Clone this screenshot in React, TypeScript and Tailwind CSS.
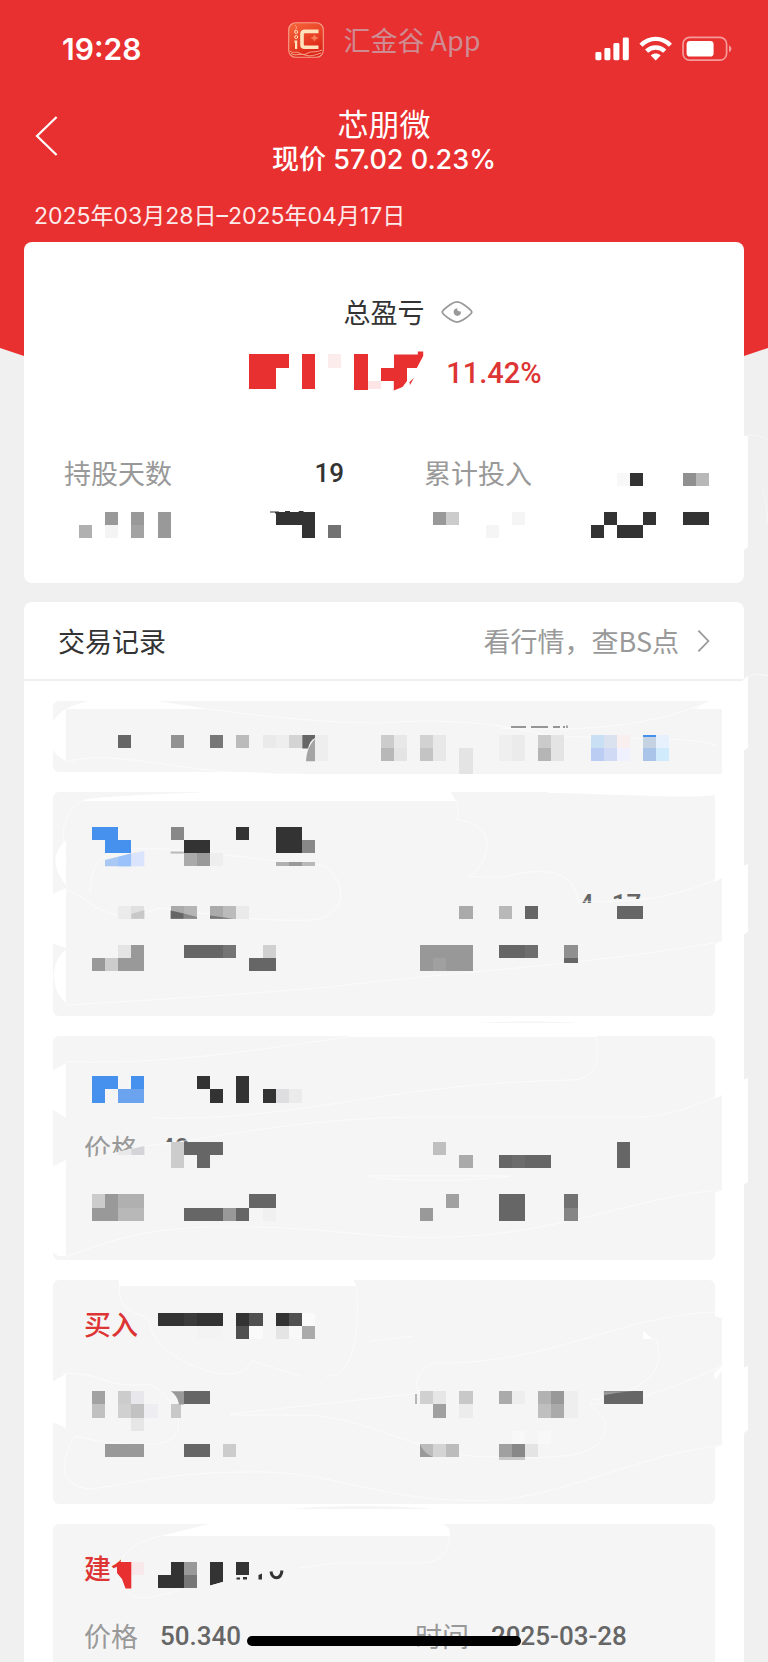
import React from "react";

const CELL = 13.125;

// [column, row, width, height, colour], all measured in mosaic cells
type Cell = [number, number, number, number, string];

const INK = "#333333";
const GREY = "#666666";
const MID = "#999999";
const BLUE = "#4690ee";
const RED = "#e83030";
const PANEL = "#f5f5f5";

function Mosaic({
  x,
  y,
  width,
  height,
  cells,
  under,
  children,
}: {
  x: number;
  y: number;
  width: number;
  height: number;
  cells: Cell[];
  under?: React.ReactNode;
  children?: React.ReactNode;
}) {
  return (
    <svg
      className="pointer-events-none absolute left-0 top-0 overflow-visible"
      width={width}
      height={height}
      viewBox={`${x} ${y} ${width} ${height}`}
      aria-hidden="true"
    >
      {under}
      <g shapeRendering="crispEdges">
        {cells.map(([c, r, w, h, fill], i) => (
          <rect key={i} x={c * CELL} y={r * CELL} width={w * CELL} height={h * CELL} fill={fill} />
        ))}
      </g>
      {children}
    </svg>
  );
}

// Faint brush edges left on the panels
function Wisps({ paths }: { paths: string[] }) {
  return (
    <g fill="none" stroke="#ffffff" strokeOpacity="0.55">
      {paths.map((d) => (
        <path key={d} d={d} />
      ))}
    </g>
  );
}

const summaryCells: Cell[] = [
  [19, 27, 3, 1, RED], [19, 28, 2, 1.6, RED], [23, 27, 1, 2.6, RED], [25, 27, 1, 1, "#fdecec"],
  [27, 27, 1, 2.7, RED], [28, 29, 1, 0.6, "#fde4e6"], [29, 28, 2, 1, RED],
  [47, 36, 1, 1, "#f8f8f8"], [48, 36, 1, 1, INK], [52, 36, 1, 1, "#909090"], [53, 36, 1, 1, "#b8b8b8"],
  [6, 40, 1, 1, "#b0b0b0"], [8, 39, 1, 1, MID], [8, 40, 1, 1, "#f4f4f4"], [10, 39, 1, 1, MID],
  [10, 40, 1, 1, "#a3a3a3"], [12, 39, 1, 2, MID], [21, 39, 3, 1, INK], [23, 40, 1, 1, INK],
  [25, 40, 1, 1, "#727272"], [33, 39, 1, 1, MID], [34, 39, 1, 1, "#cccccc"], [37, 40, 1, 1, "#f5f5f5"],
  [39, 39, 1, 1, "#f5f5f5"], [45, 40, 1, 1, INK], [46, 39, 1, 1, INK], [47, 40, 2, 1, INK],
  [49, 39, 1, 1, INK], [52, 39, 2, 1, INK],
];

const headCells: Cell[] = [
  [9, 56, 1, 1, GREY], [13, 56, 1, 1, "#929292"], [16, 56, 1, 1, "#777777"], [18, 56, 1, 1, "#bbbbbb"],
  [20, 56, 1, 1, "#eaeaea"], [21, 56, 1, 1, "#eeeeee"], [22, 56, 1, 1, "#d4d4d4"], [24, 56, 1, 2, "#eeeeee"],
  [29, 56, 1, 1, "#cccccc"], [29, 57, 1, 1, "#b8b8b8"], [30, 56, 1, 1, "#e8e8e8"], [30, 57, 1, 1, "#e4e4e4"],
  [32, 56, 1, 1, "#d2d2d2"], [32, 57, 1, 1, "#c4c4c4"], [33, 56, 1, 2, "#e8e8e8"], [35, 57, 1, 2, "#e4e4e4"],
  [38, 56, 1, 2, "#efefef"], [39, 56, 1, 2, "#ebebeb"], [41, 56, 1, 1, "#cbcbcb"], [41, 57, 1, 1, "#b5b5b5"],
  [42, 56, 1, 2, "#e4e4e4"], [45, 56, 1, 1, "#c9e0f4"], [45, 57, 1, 1, "#bccdf3"], [46, 56, 1, 1, "#dbe2ef"],
  [46, 57, 1, 1, "#d0daf4"], [47, 56, 1, 1, "#faefef"], [47, 57, 1, 1, "#f0f1ff"], [49, 56, 1, 1, "#c5d2e2"],
  [49, 56, 1, 0.16, BLUE], [49, 57, 1, 1, "#a9c4e8"], [50, 56, 1, 1, "#e6f1fd"], [50, 57, 1, 1, "#d0ecfc"],
];

const firstCells: Cell[] = [
  [7, 63, 2, 1, BLUE], [8, 64, 2, 1, BLUE], [13, 63, 1, 1, "#888888"], [14, 64, 2, 1, INK],
  [14, 65, 1, 1, "#aaaaaa"], [15, 65, 1, 1, MID], [16, 65, 1, 1, "#eeeeee"], [18, 63, 1, 1, INK],
  [21, 63, 2, 2, INK], [23, 64, 1, 1, "#888888"], [21, 65.7, 1, 0.3, "#b0b0b0"], [22, 65.7, 1, 0.3, MID],
  [23, 65.7, 1, 0.3, "#b8b8b8"],
  [9, 69, 1, 1, "#ebebeb"], [10, 69, 1, 1, "#e0e0e0"], [13, 69, 1, 1, "#aaaaaa"], [14, 69, 1, 1, "#b5b5b5"],
  [16, 69, 1, 1, "#aaaaaa"], [17, 69, 1, 1, "#bbbbbb"], [18, 69, 1, 1, "#eaeaea"], [35, 69, 1, 1, "#aaaaaa"],
  [38, 69, 1, 1, "#b8b8b8"], [40, 69, 1, 1, GREY], [47, 69, 2, 1, GREY],
  [9, 72, 1, 1, "#e4e4e4"], [10, 72, 1, 2, MID], [7, 73, 1, 1, MID], [8, 73, 1, 1, "#cccccc"],
  [9, 73, 1, 1, MID], [14, 72, 3, 1, GREY], [17, 72, 1, 1, "#747474"], [20, 72, 1, 1, "#d0d0d0"],
  [19, 73, 2, 1, GREY], [32, 72, 4, 2, "#989898"], [33, 73, 1, 1, "#a0a0a0"], [38, 72, 2, 1, GREY],
  [40, 72, 1, 1, "#6e6e6e"], [43, 72, 1, 1, "#909090"], [43, 73, 1, 0.4, GREY],
];

const secondCells: Cell[] = [
  [7, 82, 2, 1, BLUE], [7, 83, 1, 1, BLUE], [10, 82, 1, 1, BLUE], [9, 83, 2, 1, "#6ca3ef"],
  [15, 82, 1, 1, INK], [16, 83, 1, 1, INK], [18, 82, 1, 2, INK], [20, 83, 1, 1, INK],
  [21, 83, 1, 1, "#dedee0"], [22, 83, 1, 1, "#ebebeb"],
  [13, 87, 1, 2, "#cccccc"], [14, 87, 3, 1, GREY], [15, 88, 1, 1, GREY], [33, 87, 1, 1, "#bfbfbf"],
  [35, 88, 1, 1, "#aaaaaa"], [38, 88, 4, 1, GREY], [39, 88, 1, 1, "#6c6c6c"], [47, 87, 1, 2, GREY],
  [7, 91, 1, 1, "#cccccc"], [8, 91, 1, 2, MID], [9, 91, 2, 1, "#b0b0b0"], [7, 92, 1, 1, MID],
  [9, 92, 2, 1, "#b8b8b8"], [19, 91, 2, 1, GREY], [14, 92, 3, 1, GREY], [17, 92, 1, 1, MID],
  [18, 92, 1, 1, GREY], [20, 92, 1, 1, "#f0f0f0"], [34, 91, 1, 1, "#a0a0a0"], [32, 92, 1, 1, MID],
  [38, 91, 2, 2, GREY], [43, 91, 1, 1, "#727272"], [43, 92, 1, 1, "#858585"],
];

const thirdCells: Cell[] = [
  [12, 100, 5, 1, INK], [14, 100, 1, 1, "#3b3b3b"], [18, 100, 1, 1, INK], [19, 100, 1, 1, "#505050"],
  [15, 101, 2, 1, "#f3f3f3"], [18, 101, 1, 1, "#505050"], [19, 101, 1, 1, "#fafafa"], [21, 100, 1, 1, INK],
  [22, 100, 1, 1, "#505050"], [23, 100, 1, 1, "#fafafa"], [21, 101, 1, 1, "#e4e4e4"], [22, 101, 1, 1, "#f8f8f8"],
  [23, 101, 1, 1, "#aaaaaa"],
  [7, 106, 1, 1, "#a2a2a2"], [7, 107, 1, 1, "#c0c0c0"], [9, 106, 1, 1, "#cccccc"], [9, 107, 1, 1, "#d0d0d0"],
  [10, 106, 1, 1, "#e8e8ec"], [10, 107, 1, 1, "#c2c2c2"], [11, 107, 1, 1, "#eeeef2"], [10, 108, 1, 1, "#e6e6e6"],
  [14, 106, 2, 1, GREY], [13, 107, 0.8, 1, "#c8c8c8"],
  [32, 106, 1, 1, "#d0d0d0"], [33, 106, 1, 1, "#e6e6e6"], [33, 107, 1, 1, "#a0a0a0"], [35, 106, 1, 1, "#c8c8c8"],
  [35, 107, 1, 1, "#ececec"], [38, 106, 1, 1, "#aaaaaa"], [39, 106, 1, 1, "#eeeeee"], [41, 106, 1, 1, "#b2b2b2"],
  [42, 106, 1, 1, "#989898"], [41, 107, 1, 1, "#bfbfbf"], [42, 107, 1, 1, "#aaaaaa"], [43, 106, 1, 2, "#eeeeee"],
  [46, 106, 3, 1, GREY], [39, 109, 1, 1, "#f8f8f8"], [41, 109, 1, 1, "#f8f8f8"],
  [8, 110, 3, 1, MID], [14, 110, 2, 1, GREY], [17, 110, 1, 1, "#cccccc"], [32, 110, 1, 1, "#bcbcbc"],
  [33, 110, 1, 1, "#d4d4d4"], [34, 110, 1, 1, "#bcbcbc"], [38, 110, 1, 1, "#a0a0a0"], [39, 110, 1, 1, "#888888"],
  [38, 111, 2, 0.2, "#c8c8c8"], [40, 110, 1, 1, "#e4e4e4"],
];

const lastCells: Cell[] = [
  [10, 119, 1, 1, "#f8e8ea"], [12, 120, 1, 1, INK], [13, 119, 1, 2, INK], [14, 119, 1, 1, MID],
  [14, 120, 1, 1, "#777777"], [16, 119, 1, 1, INK], [18, 119, 1, 1, INK],
];

function StatusIcons() {
  return (
    <svg width="138" height="26" viewBox="594 36 138 26" aria-label="信号、无线网络、电量">
      <g fill="#ffffff">
        <rect x="595.4" y="52" width="6" height="8.2" rx="1.4" />
        <rect x="604.4" y="48" width="6" height="12.2" rx="1.4" />
        <rect x="613.4" y="43" width="6" height="17.2" rx="1.4" />
        <rect x="622.8" y="37.6" width="6" height="22.6" rx="1.4" />
        <rect x="686.6" y="41" width="27" height="15.6" rx="3.4" />
      </g>
      <g fill="none" stroke="#ffffff" strokeWidth="4.4">
        <path d="M641 45.2C649.4 36.8 662 36.8 670.4 45.2" />
        <path d="M646.6 51.2C651.8 46.2 659.6 46.2 664.8 51.2" />
      </g>
      <path d="M650.8 55.4C653.6 52.8 657.8 52.8 660.6 55.4L655.7 60.6Z" fill="#ffffff" />
      <rect x="683" y="37.4" width="43.6" height="22.8" rx="6.6" fill="none" stroke="#f59a9a" strokeWidth="1.7" />
      <path d="M729 45.4C732.2 46.6 732.2 51 729 52.2Z" fill="#f59a9a" />
    </svg>
  );
}

function AppLogo() {
  return (
    <svg width="36" height="36" viewBox="0 0 36 36" aria-hidden="true">
      <defs>
        <linearGradient id="logo" x1="0" y1="0" x2="0.5" y2="1">
          <stop offset="0" stopColor="#f8683a" />
          <stop offset="1" stopColor="#dc2418" />
        </linearGradient>
      </defs>
      <rect x="0.7" y="0.7" width="34.6" height="34.6" rx="7" fill="url(#logo)" stroke="#f5a08a" strokeWidth="1.1" />
      <g fill="none" stroke="#f7a58e" strokeWidth="1">
        <path d="M2 29C5 32 8 29 11 31S17 33 20 31S27 31 34 28" />
        <path d="M3 31.5C8 34.5 12 31 17 33S27 33 33 31" />
        <path d="M7 3C9 5 9 7 6 9" />
      </g>
      <path d="M30.5 9.4H16.8Q14 9.4 14 12.2V22.4Q14 25.2 16.8 25.2H30.5" fill="none" stroke="#ffe3bd" strokeWidth="3.6" />
      <path d="M6.4 18.4H9.2V27H7V20.4H6.4Z" fill="#ffe3bd" />
      <g fill="none" stroke="#ffe3bd" strokeWidth="1">
        <circle cx="8.2" cy="10" r="1.5" />
        <circle cx="8.2" cy="15" r="1.5" />
      </g>
      <path d="M26.5 12.5L28 14.8L30.6 16L28 17.2L26.5 19.5L25 17.2L22.4 16L25 14.8Z" fill="#f77b55" />
    </svg>
  );
}

function Record({
  label,
  children,
  overlay,
  last,
}: {
  label?: string;
  children?: React.ReactNode;
  overlay: React.ReactNode;
  last?: boolean;
}) {
  return (
    <li className={last ? "relative rounded-t-md bg-[#f5f5f5] pb-[6px] pt-6" : "relative h-56 rounded-md bg-[#f5f5f5] pt-6"}>
      <h3 className="h-10 pl-[31px] text-[27px] font-medium leading-10 text-[#dd3434]">{label}</h3>
      <dl className="mt-7 grid h-10 grid-cols-2 text-[27px] leading-10">{children}</dl>
      {overlay}
    </li>
  );
}

function Field({ name, value }: { name?: string; value?: React.ReactNode }) {
  return (
    <div className="flex gap-[22px] pl-[31px]">
      <dt className="w-[54px] shrink-0 whitespace-nowrap text-[#999999]">{name}</dt>
      <dd className="whitespace-nowrap font-[Roboto,'Noto_Sans_CJK_SC',sans-serif] text-[26px] font-medium text-[#666666]">{value}</dd>
    </div>
  );
}

export default function App() {
  return (
    <div className="relative min-h-screen overflow-hidden bg-[#f0f0f0] font-['Noto_Sans_CJK_SC',sans-serif] text-[#333333]">
      <div className="absolute inset-x-0 top-0 h-[420px] bg-[#e83030] [clip-path:polygon(0_0,100%_0,100%_348px,calc(100%_-_24px)_356px,50%_400px,24px_356px,0_348px)]" />

      <div className="relative">
        <div className="grid h-20 grid-cols-[1fr_auto_1fr] items-center">
          <time className="pl-[62px] pt-[18px] font-[Inter,sans-serif] text-[30px] font-semibold leading-8 text-white">19:28</time>
          <div className="flex items-center gap-5">
            <AppLogo />
            <span className="whitespace-nowrap text-[27px] leading-9 text-[#cf8b92]">汇金谷 App</span>
          </div>
          <div className="flex justify-end pr-9 pt-[18px]">
            <StatusIcons />
          </div>
        </div>

        <header className="grid grid-cols-[1fr_auto_1fr] pt-6 text-white">
          <button type="button" aria-label="返回" className="ml-[34px] mt-[11px] h-[42px] w-[26px]">
            <svg width="26" height="42" viewBox="0 0 26 42" fill="none" stroke="#ffffff" strokeWidth="2.2">
              <path d="M22.6 2L3 21L22.6 40" />
            </svg>
          </button>
          <div className="text-center">
            <h1 className="text-[31px] font-normal leading-[38px]">芯朋微</h1>
            <p className="font-[Inter,'Noto_Sans_CJK_SC',sans-serif] text-[27px] font-medium leading-9">现价 57.02 0.23%</p>
          </div>
        </header>
        <p className="mt-5 pl-[34px] font-[Inter,'Noto_Sans_CJK_SC',sans-serif] text-[23px] leading-9 text-[#fdeaea]">2025年03月28日–2025年04月17日</p>

        <main className="px-6">
          <section className="relative mt-2 rounded-lg bg-white pb-[90px] pt-[50px]">
            <div className="flex items-center justify-center">
              <span className="w-12" />
              <h2 className="text-[27px] font-normal leading-10">总盈亏</h2>
              <button type="button" aria-label="隐藏金额" className="w-12 pl-4">
                <svg width="32" height="24" viewBox="0 0 32 24" fill="none">
                  <path d="M1.2 12C1.2 10.2 5.4 7.2 9.4 4.4C14.4 1 17.6 1 22.6 4.4C26.6 7.2 30.8 10.2 30.8 12S26.6 16.8 22.6 19.6C17.6 23 14.4 23 9.4 19.6C5.4 16.8 1.2 13.8 1.2 12Z" stroke="#999999" strokeWidth="1.8" />
                  <path d="M16.4 8.2C15.7 9.8 16.8 11.2 19.8 11.6C20.4 14 18.6 15.9 16.4 15.9C14.2 15.9 12.6 14.2 12.6 12C12.6 9.8 14.3 8.2 16.4 8.2Z" fill="#999999" />
                </svg>
              </button>
            </div>
            <div className="mt-[21px] flex justify-center gap-6 pl-5">
              <span className="w-44" />
              <strong className="font-[Roboto,sans-serif] text-[29px] font-medium leading-10 text-[#dd3434]">11.42%</strong>
            </div>
            <dl className="mt-[60px] grid grid-cols-2 gap-x-20 px-10 text-[27px] leading-10">
              <div className="flex justify-between">
                <dt className="text-[#999999]">持股天数</dt>
                <dd className="font-[Roboto,sans-serif] text-[26px] font-medium">19</dd>
              </div>
              <div className="flex justify-between">
                <dt className="text-[#999999]">累计投入</dt>
              </div>
            </dl>
            <Mosaic x={24} y={242} width={720} height={341} cells={summaryCells}>
              <path d="M394 354.4H417.8V351.4H423.2V356L416.8 368H407V381L402.5 387L393.8 390.5V367.5H394Z" fill={RED} />
              <path d="M414 378L410 385L409.5 382Z" fill={RED} />
              <path d="M743 436H748V547L744 550H743Z" fill="#ffffff" />
              <path d="M748 435C757 435 763 437 768 440M763 490C762 495 768 498 767 525" fill="none" stroke="#f7f7f7" />
              <path d="M270 511.4H279V513.4H275V512.6H270ZM285 511H290V513H285ZM299 511H304L302 513H298Z" fill={INK} />
            </Mosaic>
          </section>

          <section className="relative mt-[19px] rounded-t-lg bg-white">
            <div className="flex h-[79px] items-center justify-between border-b-2 border-[#f0f0f0] px-[34px] text-[27px]">
              <h2 className="font-normal leading-10">交易记录</h2>
              <a href="#quotes" className="flex items-center gap-[18px] leading-10 text-[#999999]">
                看行情，查BS点
                <svg width="13" height="24" viewBox="0 0 13 24" fill="none" stroke="#999999" strokeWidth="1.8">
                  <path d="M1.4 1.6L11.4 12L1.4 22.4" />
                </svg>
              </a>
            </div>

            <div className="px-[29px] pt-5">
              <div className="relative h-[71px] rounded-md bg-[#f5f5f5]">
                <Mosaic
                  x={53}
                  y={701}
                  width={662}
                  height={71}
                  cells={headCells}
                  under={
                    <>
                      <path d="M52 724C58 710 74 704 90 701H155L206 709H66V762L78 762C68 764 57 758 52 748Z" fill="#ffffff" />
                      <path d="M66 709H722V774H280L66 760Z" fill={PANEL} />
                      <path d="M694 709L710 701H723V709Z" fill="#ffffff" />
                      <path d="M743 680L748 676V748L743 751Z" fill="#ffffff" />
                      <Wisps
                        paths={[
                          "M155 701C240 714 300 722 380 723C430 719 490 721 540 734C600 741 700 735 716 746",
                          "M66 762C100 752 150 763 200 769S260 774 300 774M500 728C580 732 650 727 708 702",
                          "M743 680C752 673 760 674 768 676",
                        ]}
                      />
                    </>
                  }
                >
                  <path d="M302.3 735H315V738C311 740 309 744 308 748.5H302.3Z" fill={GREY} />
                  <path d="M315 739V761.3H306C306.5 752 309 745 315 739Z" fill="#a4a4a4" />
                  <path d="M511 727H526M531 727H548M553 727H560M563 727H565M567 725.5V728" stroke="#777777" strokeWidth="1.3" />
                </Mosaic>
              </div>

              <ul className="mt-5 flex flex-col gap-5">
                <Record
                  overlay={
                    <Mosaic
                      x={53}
                      y={792}
                      width={662}
                      height={224}
                      cells={firstCells}
                      under={
                        <>
                          <path d="M82 801C90 796 150 795 230 791H450L456 801Z" fill="#ffffff" />
                          <path d="M548 791H716L714 795C690 799 620 794 548 793Z" fill="#ffffff" />
                          <path d="M66 840V885C52 868 52 853 66 840ZM52 894L66 888V948L52 943ZM66 950V1003C50 990 50 960 66 950Z" fill="#ffffff" />
                          <path d="M714 882L722 878V941L714 945Z" fill={PANEL} />
                          <path d="M743 866L748 864V932L743 935Z" fill="#ffffff" />
                          <path d="M570 903H605V899H645V920H570Z" fill={PANEL} />
                          <Wisps
                            paths={[
                              "M82 801C62 810 60 840 66 860M456 801C460 815 457 820 457 820C500 823 490 865 468 877H505C560 862 575 880 578 901C650 905 690 890 715 880",
                              "M90 893C90 845 125 848 160 849C200 851 310 865 325 866C350 885 345 918 310 920C250 922 200 912 160 908C100 930 90 895 66 890",
                              "M66 1005C150 1000 250 994 330 987C430 974 590 965 720 942",
                            ]}
                          />
                        </>
                      }
                    >
                      <path d="M105 860L131.3 853.6V866.3H105Z" fill="#a9c8f4" />
                      <path d="M118 857L131.3 853.6V866.3H118Z" fill="#9cc2fc" />
                      <path d="M131.3 853.4L144.4 851V866.3H131.3Z" fill="#dbe4fd" />
                      <path d="M170.6 851.5H183.8V853.6H170.6Z" fill="#bbbbbb" />
                      <path d="M170.6 910.5L183.8 913.5V918.8H170.6Z" fill="#666666" />
                      <path d="M183.8 913.5L197 917V918.8H183.8Z" fill="#888888" />
                      <path d="M210 915.5L233 918.8H210Z" fill="#777777" />
                      <path d="M131.3 914L144.4 910V918.8H131.3Z" fill="#c8c8c8" />
                    </Mosaic>
                  }
                >
                  <Field />
                  <Field
                    value={
                      <span className="flex gap-[18px] pl-[88px]">
                        <span>4</span>
                        <span>17</span>
                      </span>
                    }
                  />
                </Record>

                <Record
                  overlay={
                    <Mosaic
                      x={53}
                      y={1036}
                      width={662}
                      height={224}
                      cells={secondCells}
                      under={
                        <>
                          <path d="M66 1063V1118L52 1109V1071ZM66 1160V1256H58L52 1252V1167Z" fill="#ffffff" />
                          <path d="M350 1036H596V1037H350Z" fill="#ffffff" />
                          <path d="M714 1099L722 1095V1190L714 1193Z" fill={PANEL} />
                          <path d="M743 1080L748 1078V1182L743 1185Z" fill="#ffffff" />
                          <path d="M67 1161L118 1152L137 1147L165 1142H200V1170H67Z" fill={PANEL} />
                          <path d="M118 1152L131.3 1149V1155H118Z" fill="#e8e8e8" />
                          <path d="M131.3 1149L144.4 1146V1155H131.3Z" fill="#d4d4d8" />
                          <Wisps
                            paths={[
                              "M66 1062C180 1064 250 1050 350 1037M596 1037C600 1060 597 1080 570 1080C380 1084 300 1122 150 1118",
                              "M145 1146C220 1138 300 1117 430 1117H640C670 1117 700 1103 720 1095",
                              "M66 1257C110 1240 150 1227 220 1227C320 1225 370 1240 450 1237C560 1234 640 1196 720 1190M365 1176H510C470 1182 410 1181 375 1178",
                            ]}
                          />
                        </>
                      }
                    >
                      <path d="M475 1023C510 1021 550 1021 580 1023Z" fill={PANEL} />
                    </Mosaic>
                  }
                >
                  <Field name="价格" value="49" />
                </Record>

                <Record
                  label="买入"
                  overlay={
                    <Mosaic
                      x={53}
                      y={1280}
                      width={662}
                      height={224}
                      cells={thirdCells}
                      under={
                        <>
                          <path d="M119 1279H353L356 1286H119Z" fill="#ffffff" />
                          <path d="M66 1374V1428L52 1422V1382Z" fill="#ffffff" />
                          <path d="M714 1316L722 1318V1445L714 1448Z" fill={PANEL} />
                          <path d="M714 1373L722 1366V1371L715 1380ZM643 1331L653 1339H643Z" fill="#ffffff" />
                          <path d="M743 1368L748 1366V1430L743 1434Z" fill="#ffffff" />
                          <Wisps
                            paths={[
                              "M119 1286C118 1320 150 1310 150 1325C155 1355 220 1385 245 1370L252 1361L300 1376M356 1286C360 1315 358 1380 325 1376",
                              "M62 1374C100 1370 105 1390 150 1384C180 1400 195 1445 150 1444C120 1446 90 1440 75 1436C55 1470 65 1488 92 1489C150 1480 180 1472 250 1472C340 1470 380 1505 500 1500C580 1490 640 1455 722 1445",
                              "M230 1414L420 1393C410 1380 425 1365 435 1363C550 1365 620 1315 716 1312M230 1415H310C370 1420 400 1445 470 1456C560 1460 610 1460 605 1420L590 1404C640 1404 690 1380 722 1366M370 1341L413 1336M655 1337C665 1360 660 1390 590 1400",
                            ]}
                          />
                        </>
                      }
                    >
                      <path d="M170.6 1391.3H184V1404.5H179C178 1398 175 1394 170.6 1391.3Z" fill="#999999" />
                      <path d="M603.8 1391.3H635C620 1392 610 1394 603.8 1395.5Z" fill="#999999" />
                      <path d="M420 1444C422 1449 426 1454 433 1457H420Z" fill="#999999" />
                      <path d="M416 1394V1404" stroke="#777777" />
                    </Mosaic>
                  }
                />

                <Record
                  last
                  label="建仓"
                  overlay={
                    <Mosaic
                      x={53}
                      y={1524}
                      width={662}
                      height={132}
                      cells={lastCells}
                      under={
                        <>
                          <path d="M161 1536L213 1523H430C446 1523 450 1526 450 1536Z" fill="#ffffff" />
                          <path d="M121 1550H142V1592H111V1568.5H121Z" fill={PANEL} />
                          <Wisps
                            paths={[
                              "M161 1536C120 1545 118 1565 120 1575C125 1605 145 1600 180 1590M450 1536C448 1560 430 1563 420 1563H335L300 1568",
                            ]}
                          />
                        </>
                      }
                    >
                      <path d="M119 1561.9H131.3V1588.6H125.5L122 1579L117 1573V1563Z" fill={RED} />
                      <path d="M210 1574H223V1582L210 1585.5Z" fill={INK} />
                      <path d="M223.2 1560V1590H209L223.2 1582Z" fill={PANEL} />
                      <path d="M209 1586L224 1581.6V1590H209Z" fill={PANEL} />
                      <path d="M236.5 1577.5H240V1579.4H236.5ZM243 1577H247V1579.4H243ZM258.5 1575L262 1573.5V1579.5H258.5Z" fill={INK} />
                      <path d="M271 1571.5C272 1580 281 1580 282 1570.5" fill="none" stroke={INK} strokeWidth="3" />
                      <path d="M290 1509C330 1505 390 1505 434 1509Z" fill={PANEL} />
                    </Mosaic>
                  }
                >
                  <Field name="价格" value="50.340" />
                  <Field name="时间" value="2025-03-28" />
                </Record>
              </ul>
            </div>
          </section>
        </main>
      </div>

      <div className="fixed bottom-4 left-1/2 h-[10px] w-[274px] -translate-x-1/2 rounded-full bg-black" />
    </div>
  );
}
